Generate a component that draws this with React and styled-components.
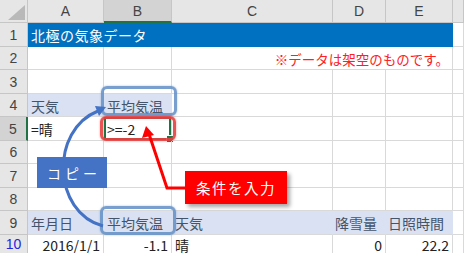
import React from "react";
import styled, { createGlobalStyle, css } from "styled-components";

const Global = createGlobalStyle`
  html, body { margin: 0; padding: 0; background: #fff; overflow: hidden; }
  * { box-sizing: border-box; }
`;

const GRID = "#d9d9d9";
const HEAD_LINE = "#c6c6c6";
const GREEN = "#217346";
const JP = `"Noto Sans CJK JP", "Noto Sans", sans-serif`;

const Frame = styled.div`
  position: relative;
  width: 464px;
  height: 253px;
  overflow: hidden;
`;

const Sheet = styled.div`
  display: grid;
  grid-template-columns: 28px 76px 68px 161px 53px 67px 1fr;
  grid-template-rows: 23px 24px 23px 24px 23px 24px 23px 24px 23px 24px 19px;
  width: 464px;
  font-family: ${JP};
  font-size: 14px;
  color: #222;
`;

const Corner = styled.div`
  position: relative;
  background: #e6e6e6;
  border-right: 1px solid ${HEAD_LINE};
  border-bottom: 1px solid ${HEAD_LINE};
  &::after {
    content: "";
    position: absolute;
    left: 8px;
    top: 5px;
    width: 17px;
    height: 15px;
    background: #b9b9b9;
    clip-path: polygon(100% 0, 100% 100%, 0 100%);
  }
`;

const ColHead = styled.div`
  display: flex;
  align-items: center;
  justify-content: center;
  background: ${(p) => (p.$selected ? "#d3d3d3" : "#e6e6e6")};
  border-right: 1px solid ${HEAD_LINE};
  border-bottom: ${(p) => (p.$selected ? `2px solid ${GREEN}` : `1px solid ${HEAD_LINE}`)};
  font-family: "Liberation Sans", Arial, sans-serif;
  font-size: 14px;
  color: #444;
  padding-top: ${(p) => (p.$selected ? "1px" : "0")};
`;

const RowHead = styled.div`
  display: flex;
  align-items: center;
  justify-content: center;
  background: ${(p) => (p.$selected ? "#d3d3d3" : "#e6e6e6")};
  border-right: ${(p) => (p.$selected ? `2px solid ${GREEN}` : `1px solid ${HEAD_LINE}`)};
  border-bottom: 1px solid ${HEAD_LINE};
  font-family: "Liberation Sans", Arial, sans-serif;
  font-size: 14px;
  color: ${(p) => (p.$link ? "#2424e0" : "#444")};
`;

const Cell = styled.div`
  position: relative;
  display: flex;
  align-items: center;
  padding: 1px 3px 0;
  white-space: nowrap;
  overflow: visible;
  border-right: 1px solid ${GRID};
  border-bottom: 1px solid ${GRID};
  justify-content: ${(p) => (p.$right ? "flex-end" : "flex-start")};
  ${(p) => p.$span && css`grid-column: span ${p.$span};`}
  ${(p) =>
    p.$fill === "title" &&
    css`
      background: #0070c0;
      border-color: #0070c0;
      color: #fff;
      letter-spacing: 0.5px;
    `}
  ${(p) =>
    p.$fill === "label" &&
    css`
      background: #d9e1f2;
      border-right-color: #d9e1f2;
      color: #44546a;
    `}
  ${(p) => p.$note && css`color: #ff2020; font-size: 13.5px;`}
  ${(p) => p.$pad && css`padding-right: ${p.$pad}px;`}
  ${(p) =>
    p.$active &&
    css`
      box-shadow: inset 0 0 0 2px ${GREEN};
      &::after {
        content: "";
        position: absolute;
        right: -3px;
        bottom: -3px;
        width: 6px;
        height: 6px;
        background: ${GREEN};
        border: 1px solid #fff;
      }
    `}
`;

const Outline = styled.div`
  position: absolute;
  left: ${(p) => p.$x}px;
  top: ${(p) => p.$y}px;
  width: ${(p) => p.$w}px;
  height: ${(p) => p.$h}px;
  border-radius: 6px;
  pointer-events: none;
  ${(p) =>
    p.$tone === "red"
      ? css`
          border: 3px solid rgba(232, 64, 64, 0.9);
          box-shadow: 0 0 2px rgba(232, 64, 64, 0.6);
        `
      : css`
          border: 3px solid rgba(96, 142, 198, 0.85);
          box-shadow: 0 0 2px rgba(96, 142, 198, 0.6);
        `}
`;

const Callout = styled.div`
  position: absolute;
  left: ${(p) => p.$x}px;
  top: ${(p) => p.$y}px;
  width: ${(p) => p.$w}px;
  height: ${(p) => p.$h}px;
  display: flex;
  align-items: center;
  justify-content: center;
  font-family: ${JP};
  color: #fff;
  ${(p) =>
    p.$tone === "red"
      ? css`
          background: #ff0000;
          font-size: 14.5px;
          letter-spacing: 1.5px;
          box-shadow: 3px 3px 4px rgba(0, 0, 0, 0.35);
        `
      : css`
          background: #4472c4;
          font-size: 14px;
          letter-spacing: 4px;
          padding-left: 4px;
        `}
`;

const Drawing = styled.svg`
  position: absolute;
  left: 0;
  top: 0;
  pointer-events: none;
`;

const cols = ["A", "B", "C", "D", "E", ""];

export default function App() {
  return (
    <Frame>
      <Global />
      <Sheet>
        <Corner />
        {cols.map((c) => (
          <ColHead key={c || "F"} $selected={c === "B"}>
            {c}
          </ColHead>
        ))}

        {/* Row 1 */}
        <RowHead>1</RowHead>
        <Cell $fill="title" $span={5}>
          北極の気象データ
        </Cell>
        <Cell />

        {/* Row 2 */}
        <RowHead>2</RowHead>
        <Cell />
        <Cell />
        <Cell $span={3} $right $note>
          ※データは架空のものです。
        </Cell>
        <Cell />

        {/* Row 3 */}
        <RowHead>3</RowHead>
        <Cell />
        <Cell />
        <Cell />
        <Cell />
        <Cell />
        <Cell />

        {/* Row 4 */}
        <RowHead>4</RowHead>
        <Cell $fill="label">天気</Cell>
        <Cell $fill="label">平均気温</Cell>
        <Cell />
        <Cell />
        <Cell />
        <Cell />

        {/* Row 5 */}
        <RowHead $selected>5</RowHead>
        <Cell>=晴</Cell>
        <Cell $active>&gt;=-2</Cell>
        <Cell />
        <Cell />
        <Cell />
        <Cell />

        {[6, 7, 8].map((r) => (
          <React.Fragment key={r}>
            <RowHead>{r}</RowHead>
            <Cell />
            <Cell />
            <Cell />
            <Cell />
            <Cell />
            <Cell />
          </React.Fragment>
        ))}

        {/* Row 9 */}
        <RowHead>9</RowHead>
        <Cell $fill="label">年月日</Cell>
        <Cell $fill="label">平均気温</Cell>
        <Cell $fill="label">天気</Cell>
        <Cell $fill="label" $right $pad={8}>
          降雪量
        </Cell>
        <Cell $fill="label" $right $pad={8}>
          日照時間
        </Cell>
        <Cell />

        {/* Row 10 */}
        <RowHead $link>10</RowHead>
        <Cell $right>2016/1/1</Cell>
        <Cell $right>-1.1</Cell>
        <Cell>晴</Cell>
        <Cell $right>0</Cell>
        <Cell $right>22.2</Cell>
        <Cell />
      </Sheet>

      <Outline $tone="blue" $x={101} $y={86} $w={76} $h={30} />
      <Outline $tone="red" $x={100} $y={116} $w={76} $h={25} />
      <Outline $tone="blue" $x={100} $y={206} $w={76} $h={29} />

      <Drawing width="464" height="253" viewBox="0 0 464 253">
        <path
          d="M103 226 C 52 212, 50 130, 98 111"
          fill="none"
          stroke="#4472c4"
          strokeWidth="3"
        />
        <polygon points="106,107 95,106 99,116" fill="#4472c4" />
        <polyline
          points="186,188 167,188 149,134"
          fill="none"
          stroke="#ff0000"
          strokeWidth="3"
          strokeLinejoin="miter"
        />
        <polygon points="146,126 142,138 154,135" fill="#ff0000" />
      </Drawing>

      <Callout $tone="blue" $x={37} $y={157} $w={70} $h={31}>
        コピー
      </Callout>
      <Callout $tone="red" $x={185} $y={171} $w={102} $h={33}>
        条件を入力
      </Callout>
    </Frame>
  );
}
